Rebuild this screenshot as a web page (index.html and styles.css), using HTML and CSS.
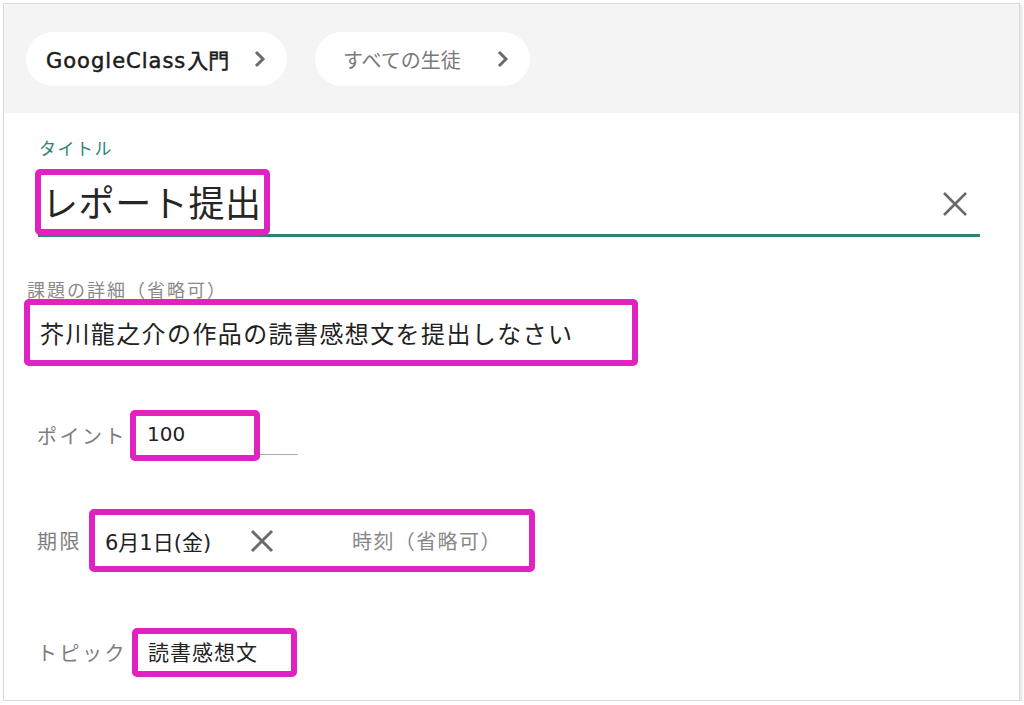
FILE: index.html
```html
<!DOCTYPE html>
<html>

<head>
    <title>課題の作成</title>
    <link rel="stylesheet" href="styles.css">
</head>

<body>
    <div class="frame">
        <div class="crumbs">
            <div class="pill pill-main">
                <span>GoogleClass<span class="jp">入門</span></span>
                <svg class="chev" width="14" height="20" viewBox="0 0 14 20"><polyline points="3,3 10,10 3,17" fill="none" stroke="#6b6b6b" stroke-width="3"/></svg>
            </div>
            <div class="pill pill-sub">
                <span>すべての生徒</span>
                <svg class="chev" width="14" height="20" viewBox="0 0 14 20"><polyline points="3,3 10,10 3,17" fill="none" stroke="#6b6b6b" stroke-width="3"/></svg>
            </div>
        </div>

        <div class="form">
            <div class="title-label">タイトル</div>
            <div class="title-row">
                <span class="mark mark-title">レポート提出</span>
                <svg class="clear" width="26" height="26" viewBox="0 0 26 26"><path d="M2 2L24 24M24 2L2 24" stroke="#6b6b6b" stroke-width="2.6"/></svg>
            </div>

            <div class="detail-label">課題の詳細（省略可）</div>
            <div class="mark mark-detail">芥川龍之介の作品の読書感想文を提出しなさい</div>

            <div class="row row-points">
                <span class="row-label">ポイント</span>
                <span class="mark mark-points">100</span>
                <span class="points-line"></span>
            </div>

            <div class="row row-due">
                <span class="row-label">期限</span>
                <span class="mark mark-due">
                    <span class="due-date">6月1日(金)</span>
                    <svg class="due-x" width="24" height="24" viewBox="0 0 24 24"><path d="M2 2L22 22M22 2L2 22" stroke="#6b6b6b" stroke-width="3"/></svg>
                    <span class="due-time">時刻（省略可）</span>
                </span>
            </div>

            <div class="row row-topic">
                <span class="row-label">トピック</span>
                <span class="mark mark-topic">読書感想文</span>
            </div>
        </div>
    </div>
</body>

</html>
```

FILE: styles.css
```css
body {
    margin: 0;
    background: #fff;
    font-family: "DejaVu Sans", "Noto Sans CJK JP", sans-serif;
    color: #222;
}

.frame {
    margin: 3px 0 0 3px;
    width: 1017px;
    height: 698px;
    box-sizing: border-box;
    border: 1px solid #d9d9d9;
    box-shadow: 2px 2px 3px rgba(0, 0, 0, 0.12);
    overflow: hidden;
    background: #fff;
}

.crumbs {
    height: 109px;
    box-sizing: border-box;
    padding: 28px 0 0 22px;
    background: #f4f4f4;
    display: flex;
    gap: 28px;
}

.pill {
    height: 54px;
    box-sizing: border-box;
    border-radius: 27px;
    background: #fff;
    display: flex;
    align-items: center;
    justify-content: space-between;
    white-space: nowrap;
}

.pill-main {
    width: 261px;
    padding: 0 20px;
    font-size: 21px;
    letter-spacing: 1px;
    color: #1c1c1c;
    -webkit-text-stroke: 0.5px #1c1c1c;
}

.pill-main .jp {
    font-family: "Noto Sans CJK JP", sans-serif;
    font-size: 21px;
    margin-left: 1px;
    letter-spacing: 0;
}

.pill-sub {
    width: 215px;
    padding: 0 20px 0 28px;
    font-size: 20px;
    color: #7a7a7a;
    font-family: "Noto Sans CJK JP", sans-serif;
}

.form {
    padding-left: 31px;
    font-family: "Noto Sans CJK JP", sans-serif;
}

.title-label {
    margin: 25px 0 0 4px;
    font-size: 17px;
    letter-spacing: 1.5px;
    line-height: 20px;
    color: #2e8474;
}

.title-row {
    margin: 11px 0 0 3px;
    width: 942px;
    height: 65px;
    border-bottom: 3px solid #2e8474;
    display: flex;
    justify-content: space-between;
    align-items: flex-start;
}

.mark {
    border: 6px solid #df22c0;
    border-radius: 5px;
    box-sizing: border-box;
    background: #fff;
    white-space: nowrap;
}

.mark-title {
    margin-left: -3px;
    width: 235px;
    height: 66px;
    padding-left: 1px;
    font-size: 36px;
    letter-spacing: 0.6px;
    line-height: 52px;
    color: #262626;
}

.clear {
    margin: 22px 12px 0 0;
}

.detail-label {
    margin: 42px 0 0 -8px;
    font-size: 18px;
    letter-spacing: 2px;
    line-height: 21px;
    color: #8a8a8a;
}

.mark-detail {
    margin: -1px 0 0 -11px;
    width: 614px;
    height: 67px;
    padding-left: 10px;
    font-size: 24px;
    letter-spacing: 1.4px;
    line-height: 55px;
}

.row {
    display: flex;
    align-items: center;
    margin-left: 2px;
}

.row-label {
    font-size: 20px;
    letter-spacing: 2.5px;
    color: #7e7e7e;
}

.row-points {
    margin-top: 44px;
    height: 51px;
}

.mark-points {
    margin-left: 3px;
    width: 130px;
    height: 51px;
    padding-left: 11px;
    font-family: "DejaVu Sans", sans-serif;
    font-size: 20px;
    line-height: 36px;
    align-self: flex-start;
}

.points-line {
    align-self: flex-start;
    margin-top: 44px;
    width: 38px;
    height: 1px;
    background: #aaa;
}

.row-due {
    margin-top: 48px;
    height: 63px;
}

.mark-due {
    margin-left: 7px;
    width: 446px;
    height: 63px;
    padding-left: 10px;
    display: flex;
    align-items: center;
    font-size: 20px;
}

.due-date {
    font-family: "DejaVu Sans", "Noto Sans CJK JP", sans-serif;
    font-size: 21px;
    width: 108px;
}

.due-x {
    margin-left: 37px;
}

.due-time {
    margin-left: 78px;
    color: #888;
    letter-spacing: 1.4px;
}

.row-topic {
    margin-top: 56px;
    height: 49px;
}

.mark-topic {
    margin-left: 5px;
    width: 165px;
    height: 49px;
    padding-left: 10px;
    font-size: 21px;
    letter-spacing: 1px;
    line-height: 34px;
}
```
